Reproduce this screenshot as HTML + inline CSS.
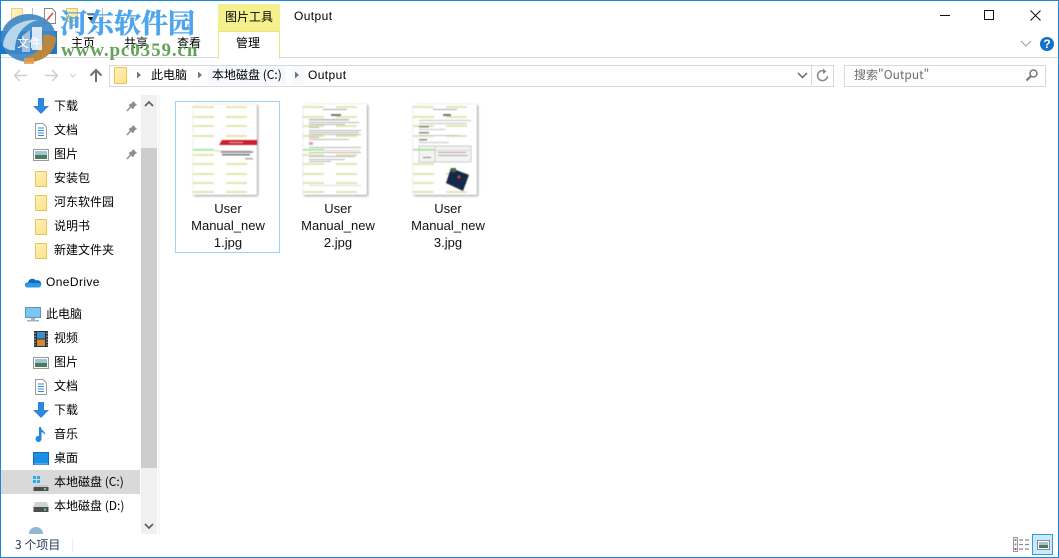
<!DOCTYPE html>
<html lang="zh"><head><meta charset="utf-8"><title>Output</title>
<style>
html,body{margin:0;padding:0;background:#fff}
#w{position:relative;width:1059px;height:558px;overflow:hidden;background:#fff;font:12px/16px "Liberation Sans","Noto Sans CJK SC",sans-serif;color:#000}
#w>*{position:absolute}
.t{white-space:nowrap}
.z{font-family:"Noto Sans CJK SC","Liberation Sans",sans-serif;font-size:12px;line-height:16px;white-space:nowrap}
.n{left:54px}
.f{width:10px;height:14px;background:linear-gradient(135deg,#fff0bb,#fde08a);border:1px solid #e8c64e;border-radius:1px;box-sizing:content-box}
.cap{text-align:center;width:104px;font-size:13px;line-height:17px;color:#111}
.th{filter:blur(.45px) drop-shadow(1px 1px 1px #999)}
svg{display:block;overflow:visible}
</style></head><body><div id="w">

<!-- window border -->
<div style="left:0;top:0;width:1059px;height:1px;background:#1a86d8"></div>
<div style="left:0;top:0;width:1px;height:558px;background:#1a86d8"></div>
<div style="right:0;top:0;width:1px;height:558px;background:#1a86d8"></div>
<div style="left:0;top:557px;width:1059px;height:1px;background:#1a86d8"></div>

<!-- ribbon -->
<div style="left:1px;top:57px;width:1057px;height:1px;background:#dadbdc"></div>
<div style="left:0;top:31px;width:57px;height:23px;background:#1979ca"></div>
<div class="z" style="left:71px;top:35px">主页</div>
<div class="z" style="left:124px;top:35px">共享</div>
<div class="z" style="left:177px;top:35px">查看</div>
<div style="left:218px;top:4px;width:62px;height:27px;background:#f4f08e"></div>
<div class="z" style="left:225px;top:9px">图片工具</div>
<div style="left:218px;top:31px;width:60px;height:27px;background:#fff;border:1px solid #ebe67a;border-bottom:none"></div>
<div class="z" style="left:236px;top:35px">管理</div>
<div class="t" style="left:294px;top:8px;font-size:12px;letter-spacing:.4px">Output</div>

<!-- quick access -->
<div class="f" style="left:11px;top:8px;height:13px;width:10px;opacity:.8"></div>
<div style="left:32px;top:8px;width:1px;height:15px;background:#bbb"></div>
<svg style="left:44px;top:8px" width="12" height="16"><path d="M.5.5H8L11.500 4V15.500H.5Z" fill="#fff" stroke="#888"/><path d="M3 12L9 5" stroke="#d9462a" stroke-width="1.500"/></svg>
<div class="f" style="left:66px;top:8px;height:12px;width:10px"></div>
<svg style="left:86px;top:14px" width="10" height="8"><path d="M1 0H9" stroke="#111"/><path d="M1.500 3H8.500L5 7Z" fill="#111"/></svg>
<div style="left:102px;top:8px;width:1px;height:15px;background:#bbb"></div>

<!-- logo watermark -->
<svg style="left:0;top:14px" width="58" height="50" viewBox="0 0 58 50">
<ellipse cx="28.500" cy="24" rx="27.500" ry="24" fill="#3f88c6" opacity=".92"/>
<path d="M30 48A27 24 0 0 0 56 24C52 20 47 20 43 21C44 32 38 40 25 44Z" fill="#b98840"/>
<path d="M3 32C4 16 18 5 38 6C25 9 15 20 15 36C11 37 6 35 3 32Z" fill="#b6d6ea"/>
<path d="M32 13H42V36H32Z" fill="#fff" opacity=".8"/>
<path d="M22 22L30 16V38H22Z" fill="#fff" opacity=".5"/>
<path d="M24 44H34V50H24Z" fill="#e59a4c" opacity=".85"/>
</svg>
<div class="z" style="left:17px;top:35px;color:#fff">文件</div>
<div style="left:60px;top:6px;font:bold 27px/32px 'Noto Serif CJK SC',serif;color:#4ea5ee;white-space:nowrap;-webkit-text-stroke:.5px #4ea5ee">河东软件园</div>
<div style="left:61px;top:41px;font:bold 19px/20px 'Liberation Serif',serif;color:#5a9e50;white-space:nowrap;letter-spacing:.9px;opacity:.95">www.pc0359.cn</div>

<!-- window controls -->
<svg style="left:930px;top:0" width="129" height="30">
<path d="M10 15.500H20" stroke="#111"/>
<rect x="54.500" y="10.500" width="9" height="9" fill="none" stroke="#111"/>
<path d="M100.500 10.500L110.500 20.500M110.500 10.500L100.500 20.500" stroke="#111"/>
</svg>
<svg style="left:1020px;top:40px" width="12" height="8"><path d="M1 1L6 6L11 1" fill="none" stroke="#a8a8a8" stroke-width="1.200"/></svg>
<div style="left:1040px;top:37px;width:14px;height:14px;border-radius:50%;background:#1473c9;color:#fff;font:bold 12px/14px 'Liberation Sans',sans-serif;text-align:center">?</div>

<!-- nav buttons -->
<svg style="left:12px;top:66px" width="100" height="20">
<path d="M3 9.500H15M8 4L2.500 9.500L8 15" fill="none" stroke="#cfcfcf" stroke-width="1.500"/>
<path d="M33 9.500H45M40 4L45.500 9.500L40 15" fill="none" stroke="#cfcfcf" stroke-width="1.500"/>
<path d="M58 8L61 11L64 8" fill="none" stroke="#cfcfcf"/>
<path d="M84 16V4M78.500 9.500L84 4L89.500 9.500" fill="none" stroke="#707070" stroke-width="2"/>
</svg>

<!-- address bar -->
<div style="left:109px;top:65px;width:723px;height:20px;border:1px solid #d9d9d9"></div>
<div style="left:208px;top:66px;width:78px;height:19px;background:#f5f9fd"></div>
<div style="left:292px;top:66px;width:12px;height:19px;background:#f5f9fd"></div>
<div class="f" style="left:114px;top:67px;width:11px;height:15px"></div>
<svg style="left:136px;top:70px" width="170" height="10" fill="#777">
<path d="M1 1.500L5 5L1 8.500Z"/>
<path d="M62 1.500L66 5L62 8.500Z"/>
<path d="M159 1.500L163 5L159 8.500Z"/>
</svg>
<div class="z" style="left:151px;top:67px">此电脑</div>
<div class="z" style="left:212px;top:67px">本地磁盘 (C:)</div>
<div class="t" style="left:308px;top:67px;letter-spacing:.4px">Output</div>
<svg style="left:797px;top:72px" width="12" height="8"><path d="M1 1L5.500 5.500L10 1" fill="none" stroke="#666" stroke-width="1.500"/></svg>
<div style="left:811px;top:66px;width:1px;height:19px;background:#d9d9d9"></div>
<svg style="left:816px;top:68px" width="14" height="15"><path d="M11.500 8A5 5 0 1 1 9 3.300" fill="none" stroke="#888" stroke-width="1.500"/><path d="M7 .5L10.500 3.500L7 6Z" fill="#888"/></svg>

<!-- search -->
<div style="left:844px;top:65px;width:200px;height:20px;border:1px solid #d9d9d9"></div>
<div class="z" style="left:854px;top:67px;color:#6d6d6d">搜索"Output"</div>
<svg style="left:1025px;top:68px" width="14" height="14"><circle cx="8.500" cy="5.500" r="3.500" fill="none" stroke="#777" stroke-width="1.500"/><path d="M6 8L1.500 12.500" stroke="#777" stroke-width="2"/></svg>

<!-- nav pane -->
<div style="left:1px;top:470px;width:139px;height:24px;background:#d9d9d9"></div>
<div style="left:141px;top:95px;width:16px;height:439px;background:#f0f0f0"></div>
<div style="left:141px;top:148px;width:16px;height:320px;background:#cdcdcd"></div>
<div style="left:158px;top:95px;width:2px;height:439px;background:#f7f7f7"></div>
<svg style="left:144px;top:100px" width="10" height="8"><path d="M1 6L5 2L9 6" fill="none" stroke="#606060" stroke-width="1.800"/></svg>
<svg style="left:144px;top:522px" width="10" height="8"><path d="M1 2L5 6L9 2" fill="none" stroke="#606060" stroke-width="1.800"/></svg>

<!-- pins -->
<svg style="left:126px;top:100px" width="12" height="60" fill="#8a8f94">
<g><path d="M7 1L11 5L9 6L7 9.500L2.500 5L6 3Z"/><path d="M4.500 7L1 11" stroke="#8a8f94" stroke-width="1.400"/></g>
<g transform="translate(0,24)"><path d="M7 1L11 5L9 6L7 9.500L2.500 5L6 3Z"/><path d="M4.500 7L1 11" stroke="#8a8f94" stroke-width="1.400"/></g>
<g transform="translate(0,48)"><path d="M7 1L11 5L9 6L7 9.500L2.500 5L6 3Z"/><path d="M4.500 7L1 11" stroke="#8a8f94" stroke-width="1.400"/></g>
</svg>

<!-- nav icons -->
<svg style="left:33px;top:98px" width="16" height="17"><path d="M5 0H11V8H16L8 16L0 8H5Z" fill="#2f86dd"/></svg>
<svg style="left:35px;top:123px" width="12" height="16"><path d="M.5.5H8L11.500 4V15.500H.5Z" fill="#fff" stroke="#999"/><path d="M3 5H9M3 7.500H9M3 10H9M3 12.500H9" stroke="#2f8ad8"/></svg>
<svg style="left:33px;top:149px" width="16" height="12"><rect x=".5" y=".5" width="15" height="11" fill="#fff" stroke="#999"/><rect x="2" y="2" width="12" height="8" fill="#9cc6d8"/><rect x="2" y="6" width="12" height="4" fill="#4f7a5e"/></svg>
<div class="f" style="left:35px;top:171px"></div>
<div class="f" style="left:35px;top:195px"></div>
<div class="f" style="left:35px;top:219px"></div>
<div class="f" style="left:35px;top:243px"></div>
<svg style="left:25px;top:276px" width="16" height="12"><path d="M2 11.500A2.500 2.500 0 0 1 3 6.500A4.500 4.500 0 0 1 11 4.500A3.500 3.500 0 0 1 14 11.500Z" fill="#0f6cbd"/><path d="M2 11.500A2.500 2.500 0 0 1 2 7H15.500A3 3 0 0 1 14 11.500Z" fill="#2a9ae8"/></svg>
<svg style="left:25px;top:307px" width="16" height="15"><rect x=".5" y=".5" width="15" height="10" fill="#7cc6f4" stroke="#5d94b8"/><rect x="6" y="11" width="4" height="2" fill="#a8b8c4"/><rect x="2" y="13" width="12" height="1.500" fill="#9fb2c0"/></svg>
<svg style="left:34px;top:331px" width="14" height="16"><rect width="14" height="16" fill="#2c3338"/><rect x="3" y="1" width="8" height="6.500" fill="#3a8fd0"/><rect x="3" y="8.500" width="8" height="6.500" fill="#d28a32"/><path d="M1 1.500V14.500M13 1.500V14.500" stroke="#ccc" stroke-dasharray="1.500 1.500"/></svg>
<svg style="left:33px;top:357px" width="16" height="12"><rect x=".5" y=".5" width="15" height="11" fill="#fff" stroke="#999"/><rect x="2" y="2" width="12" height="8" fill="#9cc6d8"/><rect x="2" y="6" width="12" height="4" fill="#4f7a5e"/></svg>
<svg style="left:35px;top:379px" width="12" height="16"><path d="M.5.5H8L11.500 4V15.500H.5Z" fill="#fff" stroke="#999"/><path d="M3 5H9M3 7.500H9M3 10H9M3 12.500H9" stroke="#2f8ad8"/></svg>
<svg style="left:33px;top:402px" width="16" height="17"><path d="M5 0H11V8H16L8 16L0 8H5Z" fill="#2f86dd"/></svg>
<svg style="left:35px;top:426px" width="12" height="17"><path d="M4 1H6C6 5 11 5 10 9C9 7 8 6.500 6.500 6V13A3 3 0 1 1 4 10Z" fill="#1e8ae6"/></svg>
<svg style="left:33px;top:452px" width="16" height="13"><rect x=".5" y=".5" width="15" height="12" fill="#1a8fe6" stroke="#0f6cb8"/><path d="M1 12H15" stroke="#7cc6f4"/></svg>
<svg style="left:33px;top:476px" width="16" height="15"><rect x="0" y="0" width="3" height="3" fill="#1fb0ea"/><rect x="4" y="0" width="3" height="3" fill="#1fb0ea"/><rect x="0" y="4" width="3" height="3" fill="#1fb0ea"/><rect x="4" y="4" width="3" height="3" fill="#1fb0ea"/><path d="M2 9H14L15.500 11H.5Z" fill="#c4c8cc"/><rect x=".5" y="11" width="15" height="4" fill="#4a4f54"/><rect x="11" y="12" width="2" height="2" fill="#5fe06a"/></svg>
<svg style="left:33px;top:502px" width="16" height="11"><path d="M2 0H14L15.500 5H.5Z" fill="#d0d3d6"/><rect x=".5" y="5" width="15" height="5" fill="#4a4f54"/><rect x="11" y="6.500" width="2" height="2" fill="#5fe06a"/></svg>
<svg style="left:29px;top:530px" width="14" height="4"><path d="M0 4A7 7 0 0 1 14 4Z" fill="#8fb8d4"/></svg>

<div class="z n" style="top:98px">下载</div>
<div class="z n" style="top:122px">文档</div>
<div class="z n" style="top:146px">图片</div>
<div class="z n" style="top:170px">安装包</div>
<div class="z n" style="top:194px">河东软件园</div>
<div class="z n" style="top:218px">说明书</div>
<div class="z n" style="top:242px">新建文件夹</div>
<div class="t" style="left:46px;top:274px;letter-spacing:.4px">OneDrive</div>
<div class="z" style="left:46px;top:306px">此电脑</div>
<div class="z n" style="top:330px">视频</div>
<div class="z n" style="top:354px">图片</div>
<div class="z n" style="top:378px">文档</div>
<div class="z n" style="top:402px">下载</div>
<div class="z n" style="top:426px">音乐</div>
<div class="z n" style="top:450px">桌面</div>
<div class="z n" style="top:474px">本地磁盘 (C:)</div>
<div class="z n" style="top:498px">本地磁盘 (D:)</div>

<!-- selection -->
<div style="left:175px;top:101px;width:103px;height:150px;border:1px solid #99d1ff"></div>

<!-- thumbnail 1 -->
<svg class="th" style="left:193px;top:104px" width="64" height="91">
<rect width="64" height="91" fill="#fff"/>
<g fill="#e3e6b0"><rect x="0" y="2" width="21" height="2"/><rect x="33" y="2" width="21" height="2"/><rect x="0" y="12" width="21" height="2"/><rect x="33" y="12" width="21" height="2"/><rect x="0" y="21" width="21" height="2"/><rect x="33" y="21" width="21" height="2"/><rect x="0" y="31" width="21" height="2"/><rect x="33" y="31" width="21" height="2"/><rect x="0" y="50" width="21" height="2"/><rect x="33" y="59" width="21" height="2"/><rect x="0" y="59" width="21" height="2"/><rect x="0" y="69" width="21" height="2"/><rect x="33" y="69" width="21" height="2"/><rect x="0" y="78" width="21" height="2"/><rect x="33" y="78" width="21" height="2"/><rect x="0" y="87" width="21" height="2"/><rect x="33" y="87" width="21" height="2"/></g>
<rect x="0" y="45" width="21" height="1.500" fill="#8fe88f"/><rect x="21" y="46.500" width="36" height="1" fill="#f6c8c8"/>
<path d="M29 36H64V41H26Z" fill="#c8202c"/><rect x="36" y="38" width="14" height="1" fill="#f0b0b0"/>
<rect x="28" y="47" width="32" height="2" fill="#999"/><rect x="29" y="50" width="28" height="1.500" fill="#777"/><rect x="52" y="54" width="8" height="1.500" fill="#aaa"/>
</svg>

<!-- thumbnail 2 -->
<svg class="th" style="left:303px;top:104px" width="64" height="91">
<rect width="64" height="91" fill="#fff"/>
<g fill="#e3e6b0"><rect x="0" y="2" width="21" height="2"/><rect x="33" y="2" width="21" height="2"/><rect x="0" y="12" width="21" height="2"/><rect x="33" y="12" width="21" height="2"/><rect x="0" y="21" width="21" height="2"/><rect x="33" y="21" width="21" height="2"/><rect x="0" y="31" width="21" height="2"/><rect x="33" y="31" width="21" height="2"/><rect x="0" y="50" width="21" height="2"/><rect x="33" y="50" width="21" height="2"/><rect x="0" y="59" width="21" height="2"/><rect x="33" y="59" width="21" height="2"/><rect x="0" y="69" width="21" height="2"/><rect x="33" y="69" width="21" height="2"/><rect x="0" y="78" width="21" height="2"/><rect x="33" y="78" width="21" height="2"/><rect x="0" y="87" width="21" height="2"/><rect x="33" y="87" width="21" height="2"/></g>
<rect x="20" y="5" width="24" height="1" fill="#aaa"/><rect x="28" y="10" width="10" height="2" fill="#777"/>
<g fill="#b8b8b8"><rect x="6" y="15" width="40" height="1.500"/><rect x="6" y="18" width="50" height="1"/><rect x="6" y="20" width="36" height="1"/><rect x="6" y="23" width="10" height="1"/><rect x="6" y="26" width="52" height="1"/><rect x="6" y="28" width="50" height="1"/><rect x="6" y="30" width="52" height="1"/><rect x="6" y="33" width="10" height="1"/><rect x="6" y="35" width="40" height="1"/><rect x="6" y="38" width="4" height="3" fill="#e8a0a0"/><rect x="6" y="43" width="52" height="1"/><rect x="6" y="48" width="52" height="1"/><rect x="6" y="52" width="46" height="1"/><rect x="6" y="55" width="36" height="1"/><rect x="6" y="57" width="22" height="1"/><rect x="6" y="81" width="52" height="1" fill="#ddd"/></g>
<rect x="0" y="45" width="21" height="1.500" fill="#8fe88f"/><rect x="21" y="46" width="36" height="1" fill="#f6c8c8"/>
</svg>

<!-- thumbnail 3 -->
<svg class="th" style="left:413px;top:104px" width="64" height="91">
<rect width="64" height="91" fill="#fff"/>
<g fill="#e3e6b0"><rect x="0" y="2" width="21" height="2"/><rect x="33" y="2" width="21" height="2"/><rect x="0" y="12" width="21" height="2"/><rect x="33" y="12" width="21" height="2"/><rect x="0" y="21" width="21" height="2"/><rect x="33" y="21" width="21" height="2"/><rect x="0" y="31" width="21" height="2"/><rect x="33" y="31" width="21" height="2"/><rect x="0" y="59" width="21" height="2"/><rect x="0" y="69" width="21" height="2"/><rect x="33" y="69" width="21" height="2"/><rect x="0" y="78" width="21" height="2"/><rect x="33" y="78" width="21" height="2"/><rect x="0" y="87" width="21" height="2"/><rect x="33" y="87" width="21" height="2"/></g>
<rect x="20" y="5" width="24" height="1" fill="#aaa"/><rect x="30" y="10" width="8" height="2" fill="#777"/>
<g fill="#c4c4c4"><rect x="6" y="16" width="52" height="1"/><rect x="6" y="19" width="48" height="1"/><rect x="6" y="22" width="10" height="1.500" fill="#888"/><rect x="6" y="25" width="26" height="1"/><rect x="6" y="28" width="10" height="1.500" fill="#888"/><rect x="6" y="31" width="40" height="1"/><rect x="6" y="35" width="8" height="1.500" fill="#888"/><rect x="6" y="38" width="30" height="1"/></g>
<rect x="6" y="42" width="52" height="16" fill="#f3f3f3" stroke="#ccc"/><path d="M22 42V58" stroke="#ccc"/><rect x="25" y="48" width="28" height="1" fill="#aaa"/><rect x="25" y="51" width="30" height="1" fill="#aaa"/><rect x="10" y="53" width="8" height="1" fill="#888"/>
<rect x="0" y="45" width="21" height="1.500" fill="#8fe88f"/><rect x="21" y="46" width="36" height="1" fill="#f6c8c8"/>
<path d="M38 64L56 71L50 87L33 79Z" fill="#14294a"/><circle cx="46" cy="73" r="1.500" fill="#d84040"/><rect x="38" y="64" width="5" height="4" fill="#466a44"/>
</svg>

<div class="cap" style="left:176px;top:200px">User<br>Manual_new<br>1.jpg</div>
<div class="cap" style="left:286px;top:200px">User<br>Manual_new<br>2.jpg</div>
<div class="cap" style="left:396px;top:200px">User<br>Manual_new<br>3.jpg</div>

<!-- status bar -->
<div class="z" style="left:15px;top:537px;color:#1e395b">3 个项目</div>
<div style="left:72px;top:538px;width:1px;height:14px;background:#eee"></div>
<svg style="left:1013px;top:537px" width="18" height="16">
<rect x=".5" y=".5" width="4" height="14" fill="#fff" stroke="#999"/><rect x="1.500" y="2" width="2" height="2" fill="#888"/><rect x="1.500" y="6.500" width="2" height="2" fill="#6a9cd0"/><rect x="1.500" y="11" width="2" height="2" fill="#d04040"/>
<path d="M6 3H10M12 3H16M6 7.500H10M12 7.500H16M6 12H10M12 12H16" stroke="#8a8a8a" stroke-width="1.200"/>
</svg>
<div style="left:1032px;top:534px;width:19px;height:19px;background:#cce8ff;border:1px solid #2aa0e0"></div>
<svg style="left:1037px;top:540px" width="14" height="10"><rect x=".5" y=".5" width="12" height="9" fill="#fff" stroke="#8a8a8a"/><rect x="2" y="2" width="9" height="6" fill="#9cc6d8"/><rect x="2" y="5" width="9" height="3" fill="#4f7a5e"/></svg>

</div></body></html>
